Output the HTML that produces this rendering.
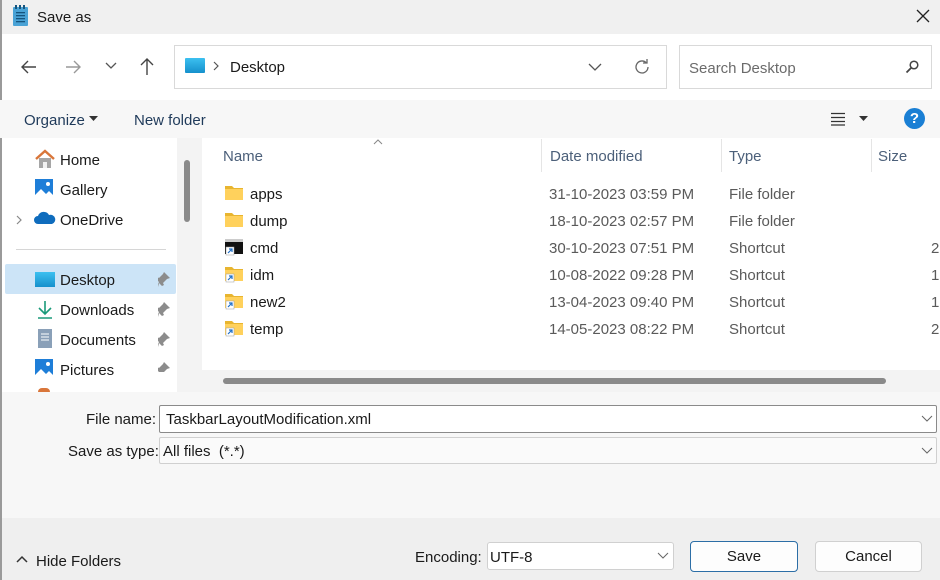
<!DOCTYPE html>
<html><head><meta charset="utf-8"><style>
*{margin:0;padding:0;box-sizing:border-box}
body{width:940px;height:580px;overflow:hidden;font-family:"Liberation Sans","DejaVu Sans",sans-serif;font-size:15px;color:#1a1a1a;background:#fff;position:relative}
.a{position:absolute}
.t{position:absolute;white-space:nowrap;margin-top:1px}
</style></head><body>
<div class="a" style="left:0;top:0;width:940px;height:34px;background:#f0f0f0"></div>
<div class="a" style="left:0;top:0;width:2px;height:580px;background:#9a9a9a"></div>
<svg class="a" style="left:12px;top:5px" width="18" height="22" viewBox="0 0 18 22"><rect x="1" y="2" width="15" height="19" rx="1" fill="#4aa3d6"/><g fill="#16557e"><rect x="3" y="0" width="2" height="4"/><rect x="7" y="0" width="2" height="4"/><rect x="11" y="0" width="2" height="4"/><rect x="4" y="7" width="9" height="1.3"/><rect x="4" y="10" width="9" height="1.3"/><rect x="4" y="13" width="9" height="1.3"/><rect x="4" y="16" width="9" height="1.3"/></g></svg>
<div class="t" style="left:37px;top:8px;font-size:15px">Save as</div>
<svg class="a" style="left:915px;top:8px" width="16" height="16"><path d="M2 2L14 14M14 2L2 14" stroke="#222" stroke-width="1.3"/></svg>
<svg class="a" style="left:20px;top:58px" width="18" height="18"><path d="M16 9H2M8 3L2 9l6 6" stroke="#444" stroke-width="1.4" fill="none"/></svg>
<svg class="a" style="left:64px;top:58px" width="18" height="18"><path d="M2 9h14M10 3l6 6-6 6" stroke="#999" stroke-width="1.4" fill="none"/></svg>
<svg class="a" style="left:104px;top:61px" width="14" height="10"><path d="M2 2l5 5 5-5" stroke="#555" stroke-width="1.3" fill="none"/></svg>
<svg class="a" style="left:138px;top:57px" width="18" height="20"><path d="M9 18V2M3 8l6-6 6 6" stroke="#444" stroke-width="1.4" fill="none"/></svg>
<div class="a" style="left:174px;top:45px;width:493px;height:44px;border:1px solid #d9d9d9;background:#fff"></div>
<div class="a" style="left:185px;top:58px;width:20px;height:15px;background:linear-gradient(#3cc0f0,#1590cc);border-radius:1px"></div>
<svg class="a" style="left:212px;top:61px" width="8" height="10"><path d="M2 1l4 4-4 4" stroke="#555" stroke-width="1.2" fill="none"/></svg>
<div class="t" style="left:230px;top:58px">Desktop</div>
<svg class="a" style="left:587px;top:62px" width="16" height="10"><path d="M2 2l6 6 6-6" stroke="#555" stroke-width="1.3" fill="none"/></svg>
<svg class="a" style="left:632px;top:57px" width="20" height="20"><path d="M16 10a6 6 0 1 1-2-4.5M15 2v4h-4" stroke="#666" stroke-width="1.3" fill="none"/></svg>
<div class="a" style="left:679px;top:45px;width:253px;height:44px;border:1px solid #d9d9d9;background:#fff"></div>
<div class="t" style="left:689px;top:59px;color:#6b6b6b">Search Desktop</div>
<svg class="a" style="left:904px;top:59px" width="16" height="16"><circle cx="10" cy="6" r="3.8" stroke="#444" stroke-width="1.5" fill="none"/><path d="M7 9l-4.5 4.5" stroke="#444" stroke-width="1.8"/></svg>
<div class="a" style="left:0;top:100px;width:940px;height:38px;background:#f7f7f7"></div>
<div class="t" style="left:24px;top:111px;color:#1f3a5a">Organize</div>
<svg class="a" style="left:89px;top:116px" width="9" height="6"><path d="M0 0h9L4.5 5z" fill="#333"/></svg>
<div class="t" style="left:134px;top:111px;color:#1f3a5a">New folder</div>
<svg class="a" style="left:830px;top:112px" width="16" height="14"><path d="M1 1.5h14M1 5.5h14M1 9.5h14M1 13h14" stroke="#333" stroke-width="1.2"/></svg>
<svg class="a" style="left:859px;top:116px" width="9" height="6"><path d="M0 0h9L4.5 5z" fill="#333"/></svg>
<div class="a" style="left:904px;top:108px;width:21px;height:21px;border-radius:50%;background:#1a7fd4;color:#fff;font-size:15px;text-align:center;line-height:21px;font-weight:bold">?</div>
<div class="a" style="left:177px;top:138px;width:20px;height:254px;background:#f3f3f3"></div>
<div class="a" style="left:184px;top:160px;width:6px;height:62px;background:#8a8a8a;border-radius:3px"></div>
<svg class="a" style="left:34px;top:149px" width="22" height="20"><path d="M2 10L11 2l9 8" stroke="#d9763a" stroke-width="2.4" fill="none"/><path d="M5 9v10h12V9" fill="#a6a6a6"/><rect x="9" y="13" width="4" height="6" fill="#f2f2f2"/></svg>
<div class="t" style="left:60px;top:151px">Home</div>
<svg class="a" style="left:35px;top:179px" width="20" height="20"><rect x="0" y="0" width="18" height="18" fill="#1e7ed8"/><path d="M0 16l6-6 5 5 3-3 4 4v2H0z" fill="#fff"/><circle cx="13" cy="5" r="2" fill="#fff"/></svg>
<div class="t" style="left:60px;top:181px">Gallery</div>
<svg class="a" style="left:15px;top:214px" width="8" height="12"><path d="M2 2l4 4-4 4" stroke="#888" stroke-width="1.2" fill="none"/></svg>
<svg class="a" style="left:34px;top:211px" width="22" height="14"><path d="M4 13a4 4 0 0 1 0-8 6 6 0 0 1 11-1 4.5 4.5 0 0 1 3 9z" fill="#0f6cbd"/></svg>
<div class="t" style="left:60px;top:211px">OneDrive</div>
<div class="a" style="left:16px;top:249px;width:150px;height:1px;background:#d6d6d6"></div>
<div class="a" style="left:5px;top:264px;width:171px;height:30px;background:#cce4f7;border-radius:2px"></div>
<div class="a" style="left:35px;top:272px;width:20px;height:15px;background:linear-gradient(#3cc0f0,#1590cc)"></div>
<div class="t" style="left:60px;top:271px">Desktop</div>
<svg class="a" style="left:37px;top:300px" width="16" height="20"><path d="M8 1v13M2 8l6 6 6-6M1 18h14" stroke="#1a9a7a" stroke-width="1.6" fill="none"/></svg>
<div class="t" style="left:60px;top:301px">Downloads</div>
<svg class="a" style="left:37px;top:329px" width="16" height="20"><rect x="1" y="0" width="14" height="19" fill="#8aa0b8"/><path d="M4 5h8M4 8h8M4 11h8" stroke="#fff"/></svg>
<div class="t" style="left:60px;top:331px">Documents</div>
<svg class="a" style="left:35px;top:359px" width="20" height="20"><rect x="0" y="0" width="18" height="18" fill="#1e7ed8"/><path d="M0 16l6-6 5 5 3-3 4 4v2H0z" fill="#fff"/><circle cx="13" cy="5" r="2" fill="#fff"/></svg>
<div class="t" style="left:60px;top:361px">Pictures</div>
<div class="a" style="left:38px;top:388px;width:12px;height:4px;border-radius:6px 6px 0 0;background:#d9763a"></div>
<svg class="a" style="left:158px;top:272px" width="14" height="100"><g fill="#8c8c8c"><path d="M6 0l6 6-3 1-4 4 1 2-2 1-3-3-1 4-1-1 2-4-3-3 1-2 2 1 4-4z"/><path transform="translate(0,30)" d="M6 0l6 6-3 1-4 4 1 2-2 1-3-3-1 4-1-1 2-4-3-3 1-2 2 1 4-4z"/><path transform="translate(0,60)" d="M6 0l6 6-3 1-4 4 1 2-2 1-3-3-1 4-1-1 2-4-3-3 1-2 2 1 4-4z"/><path transform="translate(0,90)" d="M6 0l6 6-3 1-4 4 1 2-2 1-3-3-1 4-1-1 2-4-3-3 1-2 2 1 4-4z"/></g></svg>
<div class="a" style="left:197px;top:138px;width:5px;height:254px;background:#f3f3f3"></div>
<svg class="a" style="left:373px;top:139px" width="10" height="6"><path d="M1 5l4-4 4 4" stroke="#888" fill="none"/></svg>
<div class="t" style="left:223px;top:147px;color:#4c607a">Name</div>
<div class="a" style="left:541px;top:139px;width:1px;height:33px;background:#e5e5e5"></div>
<div class="t" style="left:550px;top:147px;color:#4c607a">Date modified</div>
<div class="a" style="left:721px;top:139px;width:1px;height:33px;background:#e5e5e5"></div>
<div class="t" style="left:729px;top:147px;color:#4c607a">Type</div>
<div class="a" style="left:871px;top:139px;width:1px;height:33px;background:#e5e5e5"></div>
<div class="t" style="left:878px;top:147px;color:#4c607a">Size</div>
<svg class="a" style="left:225px;top:184px" width="20" height="160">
<defs><g id="f"><path d="M0 2h7l2 2h9v12H0z" fill="#e8b530"/><path d="M0 5h18v11H0z" fill="#ffd15c"/></g><g id="s"><rect x="1" y="9" width="8" height="8" fill="#fff" stroke="#999" stroke-width=".5"/><path d="M3 15l4-4M4 11h3v3" stroke="#1e6fc8" stroke-width="1.2" fill="none"/></g></defs>
<use href="#f" y="0"/><use href="#f" y="27"/>
<rect x="0" y="55" width="18" height="15" fill="#111"/><rect x="0" y="55" width="18" height="3" fill="#ccc"/><use href="#s" y="54"/>
<use href="#f" y="81"/><use href="#s" y="81"/>
<use href="#f" y="108"/><use href="#s" y="108"/>
<use href="#f" y="135"/><use href="#s" y="135"/>
</svg>
<div class="t" style="left:250px;top:185px">apps</div><div class="t" style="left:549px;top:185px;color:#5a5a5a">31-10-2023 03:59 PM</div><div class="t" style="left:729px;top:185px;color:#5a5a5a">File folder</div>
<div class="t" style="left:250px;top:212px">dump</div><div class="t" style="left:549px;top:212px;color:#5a5a5a">18-10-2023 02:57 PM</div><div class="t" style="left:729px;top:212px;color:#5a5a5a">File folder</div>
<div class="t" style="left:250px;top:239px">cmd</div><div class="t" style="left:549px;top:239px;color:#5a5a5a">30-10-2023 07:51 PM</div><div class="t" style="left:729px;top:239px;color:#5a5a5a">Shortcut</div><div class="t" style="left:931px;top:239px;color:#5a5a5a">2</div>
<div class="t" style="left:250px;top:266px">idm</div><div class="t" style="left:549px;top:266px;color:#5a5a5a">10-08-2022 09:28 PM</div><div class="t" style="left:729px;top:266px;color:#5a5a5a">Shortcut</div><div class="t" style="left:931px;top:266px;color:#5a5a5a">1</div>
<div class="t" style="left:250px;top:293px">new2</div><div class="t" style="left:549px;top:293px;color:#5a5a5a">13-04-2023 09:40 PM</div><div class="t" style="left:729px;top:293px;color:#5a5a5a">Shortcut</div><div class="t" style="left:931px;top:293px;color:#5a5a5a">1</div>
<div class="t" style="left:250px;top:320px">temp</div><div class="t" style="left:549px;top:320px;color:#5a5a5a">14-05-2023 08:22 PM</div><div class="t" style="left:729px;top:320px;color:#5a5a5a">Shortcut</div><div class="t" style="left:931px;top:320px;color:#5a5a5a">2</div>
<div class="a" style="left:202px;top:370px;width:738px;height:22px;background:#f3f3f3"></div>
<div class="a" style="left:223px;top:378px;width:663px;height:6px;background:#8a8a8a;border-radius:3px"></div>
<div class="a" style="left:2px;top:392px;width:938px;height:126px;background:#f7f7f7"></div>
<div class="t" style="left:86px;top:410px">File name:</div>
<div class="a" style="left:159px;top:405px;width:778px;height:28px;border:1px solid #8a8a8a;background:#fff;border-radius:2px"></div>
<div class="t" style="left:166px;top:410px">TaskbarLayoutModification.xml</div>
<svg class="a" style="left:921px;top:415px" width="12" height="8"><path d="M1 1l5 5 5-5" stroke="#666" fill="none"/></svg>
<div class="t" style="left:68px;top:442px">Save as type:</div>
<div class="a" style="left:159px;top:437px;width:778px;height:27px;border:1px solid #d0d0d0;background:#fafafa;border-radius:2px"></div>
<div class="t" style="left:163px;top:442px">All files&nbsp; (*.*)</div>
<svg class="a" style="left:921px;top:447px" width="12" height="8"><path d="M1 1l5 5 5-5" stroke="#666" fill="none"/></svg>
<div class="a" style="left:2px;top:518px;width:938px;height:62px;background:#efefef"></div>
<svg class="a" style="left:16px;top:555px" width="12" height="8"><path d="M1 7l5-5 5 5" stroke="#333" stroke-width="1.5" fill="none"/></svg>
<div class="t" style="left:36px;top:552px">Hide Folders</div>
<div class="t" style="left:415px;top:548px">Encoding:</div>
<div class="a" style="left:487px;top:542px;width:187px;height:28px;border:1px solid #d0d0d0;background:#fff;border-radius:3px"></div>
<div class="t" style="left:490px;top:548px">UTF-8</div>
<svg class="a" style="left:657px;top:552px" width="12" height="8"><path d="M1 1l5 5 5-5" stroke="#666" fill="none"/></svg>
<div class="a" style="left:690px;top:541px;width:108px;height:31px;border:1px solid #2c6ea6;background:#fdfdfd;border-radius:4px;text-align:center;line-height:29px">Save</div>
<div class="a" style="left:815px;top:541px;width:107px;height:31px;border:1px solid #d0d0d0;background:#fdfdfd;border-radius:4px;text-align:center;line-height:29px">Cancel</div>
</body></html>
